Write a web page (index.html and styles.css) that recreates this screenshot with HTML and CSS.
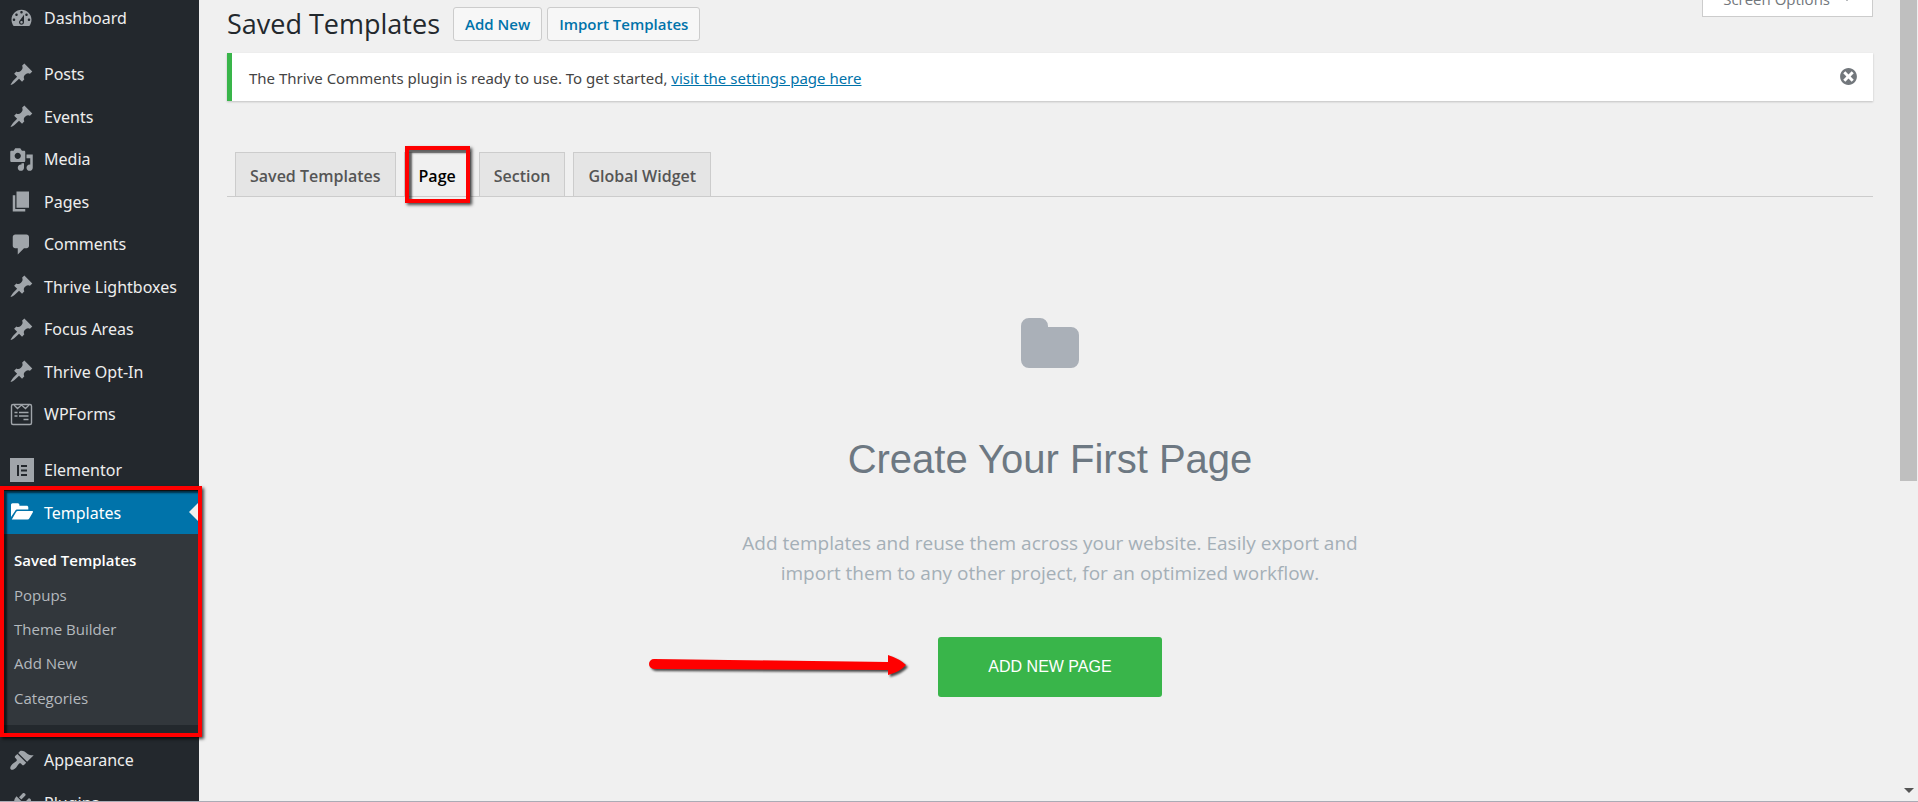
FILE: index.html
```html
<!DOCTYPE html>
<html lang="en">
<head>
<meta charset="utf-8">
<title>Saved Templates</title>
<link rel="stylesheet" href="styles.css">
</head>
<body>
<svg class="defs" aria-hidden="true">
  <symbol id="pin" viewBox="0 0 20 20"><path d="M10.44 3.02l1.82-1.82 6.36 6.35-1.83 1.82c-1.05-.68-2.48-.57-3.41.36l-.75.75c-.92.93-1.04 2.35-.35 3.41l-1.83 1.82-2.41-2.41-2.8 2.79c-.42.42-3.38 2.71-3.8 2.29s1.86-3.39 2.28-3.81l2.79-2.79L4.1 9.36l1.83-1.82c1.05.69 2.48.57 3.4-.36l.75-.75c.93-.92 1.05-2.35.36-3.41z"/></symbol>
</svg>
<div class="app">
  <nav class="sidebar" aria-label="Admin menu">
    <ul class="menu">
      <li class="menu-item"><a href="#"><svg class="icon" viewBox="0 0 20 20"><path d="M3.76 16h12.48c1.1-1.37 1.76-3.11 1.76-5 0-4.42-3.58-8-8-8s-8 3.58-8 8c0 1.89.66 3.63 1.76 5zM10 4c.55 0 1 .45 1 1s-.45 1-1 1-1-.45-1-1 .45-1 1-1zM6 6c.55 0 1 .45 1 1s-.45 1-1 1-1-.45-1-1 .45-1 1-1zm8 0c.55 0 1 .45 1 1s-.45 1-1 1-1-.45-1-1 .45-1 1-1zm-5.37 5.55L12 7v6c0 1.1-.9 2-2 2s-2-.9-2-2c0-.57.24-1.08.63-1.45zM4 10c.55 0 1 .45 1 1s-.45 1-1 1-1-.45-1-1 .45-1 1-1zm12 0c.55 0 1 .45 1 1s-.45 1-1 1-1-.45-1-1 .45-1 1-1zm-5 3c0-.55-.45-1-1-1s-1 .45-1 1 .45 1 1 1 1-.45 1-1z"/></svg>Dashboard</a></li>
    </ul>
    <ul class="menu">
      <li class="menu-item"><a href="#"><svg class="icon"><use href="#pin"/></svg>Posts</a></li>
      <li class="menu-item"><a href="#"><svg class="icon"><use href="#pin"/></svg>Events</a></li>
      <li class="menu-item"><a href="#"><svg class="icon" viewBox="0 0 20 20"><path d="M13 11V4c0-.55-.45-1-1-1h-1.67L9 1H5L3.67 3H2c-.55 0-1 .45-1 1v7c0 .55.45 1 1 1h10c.55 0 1-.45 1-1zM7 4.5c1.38 0 2.5 1.12 2.5 2.5S8.38 9.5 7 9.5 4.5 8.38 4.5 7 5.62 4.5 7 4.5zM14 6h5v10.5c0 1.38-1.12 2.5-2.5 2.5S14 17.88 14 16.5s1.12-2.5 2.5-2.5c.17 0 .34.02.5.05V9h-3V6zm-4 8.05V13h2v3.5c0 1.38-1.12 2.5-2.5 2.5S7 17.88 7 16.5 8.12 14 9.5 14c.17 0 .34.02.5.05z"/></svg>Media</a></li>
      <li class="menu-item"><a href="#"><svg class="icon" viewBox="0 0 20 20"><path d="M6 15V2h10v13H6zm-1 1h8v2H3V5h2v11z"/></svg>Pages</a></li>
      <li class="menu-item"><a href="#"><svg class="icon" viewBox="0 0 20 20"><path d="M5 2h9c1.1 0 2 .9 2 2v7c0 1.1-.9 2-2 2h-2l-5 5v-5H5c-1.1 0-2-.9-2-2V4c0-1.1.9-2 2-2z"/></svg>Comments</a></li>
      <li class="menu-item"><a href="#"><svg class="icon"><use href="#pin"/></svg>Thrive Lightboxes</a></li>
      <li class="menu-item"><a href="#"><svg class="icon"><use href="#pin"/></svg>Focus Areas</a></li>
      <li class="menu-item"><a href="#"><svg class="icon"><use href="#pin"/></svg>Thrive Opt-In</a></li>
      <li class="menu-item"><a href="#"><svg class="icon" viewBox="0 0 25 25"><g fill="none" stroke="currentColor"><rect x="2.5" y="2.5" width="20" height="20" rx="1.5" stroke-width="1.4"/><path d="M5 3l3.5 3.5L12.5 3l4 3.500L20 3" stroke-width="1.3"/><path d="M5.500 10.500h3M10 10.500h9.500M5.500 14h3M10 14h9.500M14.500 17.500h5" stroke-width="1.500"/></g></svg>WPForms</a></li>
    </ul>
    <ul class="menu">
      <li class="menu-item"><a href="#"><svg class="icon" viewBox="0 0 25 25"><path fill-rule="evenodd" d="M1 0h24v24H1zM8 7v11h2V7zM12 7v2h6V7zM12 11.500v2h6v-2zM12 16v2h6v-2z"/></svg>Elementor</a></li>
      <li class="menu-item current">
        <a href="#"><svg class="icon" viewBox="0 0 25 25"><path d="M2 17V5c0-1 .6-1.700 1.600-1.700h5.200c1 0 1.600.7 1.600 1.700v.7h7.200c1 0 1.700.7 1.700 1.700v2.200H8.500c-1 0-1.900.5-2.400 1.400z"/><path d="M2.800 19.500l4.200-7.300c.4-.7 1-1.100 1.800-1.100h14.400c.7 0 1 .6.700 1.200l-3.500 6c-.4.800-1 1.200-1.900 1.200z"/></svg>Templates</a>
        <ul class="submenu">
          <li><a class="selected" href="#">Saved Templates</a></li>
          <li><a href="#">Popups</a></li>
          <li><a href="#">Theme Builder</a></li>
          <li><a href="#">Add New</a></li>
          <li><a href="#">Categories</a></li>
        </ul>
        <span class="highlight highlight-menu"></span>
      </li>
    </ul>
    <ul class="menu">
      <li class="menu-item"><a href="#"><svg class="icon" viewBox="0 0 20 20"><path d="M14.48 11.06L7.41 3.99l1.5-1.5c.5-.56 2.3-.47 3.51.32 1.21.8 1.43 1.28 2.91 2.1 1.18.64 2.45 1.26 4.45.85zm-.71.71L6.7 4.7 4.93 6.47c-.39.39-.39 1.02 0 1.41l1.06 1.06c.39.39.39 1.03 0 1.42-.6.6-1.43 1.11-2.21 1.69-.35.26-.7.53-1.01.84C1.43 14.23.4 16.08 1.4 17.07c.99 1 2.84-.03 4.18-1.36.31-.31.58-.66.85-1.02.57-.78 1.08-1.61 1.69-2.21.39-.39 1.02-.39 1.41 0l1.06 1.06c.39.39 1.02.39 1.41 0z"/></svg>Appearance</a></li>
      <li class="menu-item"><a href="#"><svg class="icon" viewBox="0 0 20 20"><path d="M13.11 4.36L9.87 7.6 8 5.73l3.24-3.24c.35-.34 1.05-.2 1.56.32.52.51.66 1.21.31 1.55zm-8 1.77l.91-1.12 9.01 9.01-1.19.84c-.71.71-2.63 1.16-3.82 1.16H6.14L4.9 17.26c-.59.59-1.54.59-2.12 0-.59-.58-.59-1.53 0-2.12l1.24-1.24v-3.88c0-1.13.4-3.19 1.09-3.89zm7.26 3.97l3.24-3.24c.34-.35 1.04-.21 1.55.31.52.51.66 1.21.31 1.55l-3.24 3.25z"/></svg>Plugins</a></li>
    </ul>
  </nav>

  <main class="content">
    <header class="page-head">
      <h1>Saved Templates</h1>
      <a class="action" href="#">Add New</a>
      <a class="action" href="#">Import Templates</a>
      <button class="screen-options" type="button">Screen Options<span class="caret"></span></button>
    </header>

    <div class="notice">
      <p>The Thrive Comments plugin is ready to use. To get started, <a href="#">visit the settings page here</a></p>
      <button class="dismiss" type="button" aria-label="Dismiss this notice"><svg viewBox="0 0 20 20"><path d="M10 2c4.420 0 8 3.580 8 8s-3.580 8-8 8-8-3.580-8-8 3.580-8 8-8zm5 11l-3-3 3-3-2-2-3 3-3-3-2 2 3 3-3 3 2 2 3-3 3 3z"/></svg></button>
    </div>

    <nav class="tabs" aria-label="Template types">
      <a class="tab" href="#">Saved Templates</a>
      <a class="tab active" href="#">Page<span class="highlight highlight-tab"></span></a>
      <a class="tab" href="#">Section</a>
      <a class="tab" href="#">Global Widget</a>
    </nav>

    <section class="blank">
      <svg class="folder" viewBox="0 0 58 50"><path d="M8 0h11a8 8 0 0 1 8 8v1h23a8 8 0 0 1 8 8v25a8 8 0 0 1-8 8H8a8 8 0 0 1-8-8V8a8 8 0 0 1 8-8z"/></svg>
      <h2>Create Your First Page</h2>
      <p>Add templates and reuse them across your website. Easily export and import them to any other project, for an optimized workflow.</p>
      <a class="create" href="#">ADD NEW PAGE
        <svg class="pointer" viewBox="0 0 264 28"><path d="M6 6L240 9V2q12 4 18 10q-6 7-18 10V17L6 16a5 5 0 0 1 0-10z"/></svg>
      </a>
    </section>
  </main>

  <div class="scrollbar"><span class="thumb"></span><span class="down"></span></div>
</div>
</body>
</html>
```

FILE: styles.css
```css
* { box-sizing: border-box; }

body {
  margin: 0;
  background: #f0f0f0;
  color: #444;
  font-family: "Open Sans", "Noto Sans", sans-serif;
  font-size: 15px;
}

ul { list-style: none; margin: 0; padding: 0; }
a { color: #0073aa; }
.defs { display: none; }

.app {
  display: flex;
  height: 100vh;
  overflow: hidden;
  border-bottom: 1px solid #aaabb5;
}

/* Sidebar */
.sidebar {
  position: relative;
  z-index: 1;
  flex: 0 0 199px;
  display: flex;
  flex-direction: column;
  gap: 14px;
  margin-top: -3px;
  background: #23282d;
}

.menu-item > a {
  display: flex;
  align-items: center;
  gap: 10px;
  height: 42px;
  padding-left: 9px;
  color: #eee;
  font-family: "Noto Sans", "Open Sans", sans-serif;
  font-size: 16px;
  white-space: nowrap;
  text-decoration: none;
}

.menu-item:nth-child(even) > a { height: 43px; }

.icon {
  flex: none;
  width: 25px;
  height: 25px;
  color: #a0a5aa;
  fill: currentColor;
}

.current { position: relative; }
.menu-item.current > a {
  position: relative;
  background: #0073aa;
  color: #fff;
}
.current .icon { color: #fff; }
.current > a::after {
  content: "";
  position: absolute;
  right: 0;
  top: 11px;
  border: 10px solid transparent;
  border-left-width: 0;
  border-right-color: #f0f0f0;
}

.submenu {
  padding: 8px 0 9px;
  background: #32373c;
}
.submenu a {
  display: block;
  padding-left: 14px;
  line-height: 34px;
  color: #b4b9be;
  text-decoration: none;
}
.submenu a.selected { color: #fff; font-weight: 600; line-height: 36px; }
.submenu li:nth-child(n+4) a { line-height: 35px; }

.highlight {
  position: absolute;
  border: 4px solid #f00;
  box-shadow: 2px 2px 3px rgba(0, 0, 0, .7), inset 3px 3px 2px rgba(0, 0, 0, .6);
  pointer-events: none;
}
.highlight-menu { inset: -5px -3px -12px 0; }
.highlight-tab { inset: -7px 0 -7px 0; }

/* Content */
.content {
  flex: 1;
  min-width: 0;
  padding: 0 27px 0 28px;
}

.page-head {
  display: flex;
  align-items: flex-start;
  height: 53px;
  padding-top: 7px;
}
.page-head h1 {
  margin: 0 13px 0 0;
  color: #23282d;
  font-size: 27px;
  font-weight: 400;
  line-height: 34px;
}
.action {
  margin-right: 5px;
  padding: 0 11px;
  border: 1px solid #ccc;
  border-radius: 3px;
  background: #f7f7f7;
  font-weight: 600;
  line-height: 32px;
  text-decoration: none;
}
.screen-options {
  display: flex;
  align-items: center;
  gap: 12px;
  height: 34px;
  margin: -24px 0 0 auto;
  padding: 0 20px 2px;
  border: 1px solid #ccc;
  border-top: 0;
  background: #fff;
  color: #72777c;
  font: inherit;
}
.caret {
  border: 5px solid transparent;
  border-top-color: #72777c;
  border-bottom: 0;
}

.notice {
  display: flex;
  align-items: center;
  justify-content: space-between;
  height: 48px;
  padding: 0 14px 0 17px;
  border-left: 5px solid #39b54a;
  background: #fff;
  box-shadow: 0 1px 2px rgba(0, 0, 0, .2);
}
.notice p {
  margin: 0;
  padding-top: 2px;
  font-family: "Noto Sans", "Open Sans", sans-serif;
  line-height: 24px;
}
.dismiss {
  width: 21px;
  height: 23px;
  padding: 0 0 2px;
  border: 0;
  background: none;
  fill: #72777c;
}
.dismiss svg { display: block; }

.tabs {
  display: flex;
  gap: 8px;
  margin-top: 51px;
  padding-left: 8px;
  border-bottom: 1px solid #ccc;
}
.tab {
  position: relative;
  height: 44px;
  padding: 0 14px;
  border: 1px solid #ccc;
  border-bottom: 0;
  background: #e5e5e5;
  color: #555;
  font-size: 16px;
  font-weight: 600;
  line-height: 46px;
  text-decoration: none;
}
.tab.active { background: #f0f0f0; color: #000; }

.blank {
  display: flex;
  flex-direction: column;
  align-items: center;
  padding-top: 121px;
  text-align: center;
}
.folder { width: 58px; height: 50px; fill: #aab0b8; }
.blank h2 {
  margin: 67px 0 0;
  color: #6d7882;
  font: 400 40px/48px "Liberation Sans", Arial, sans-serif;
}
.blank p {
  max-width: 640px;
  margin: 45px 0 0;
  color: #a4afb7;
  font-size: 19px;
  line-height: 30px;
}
.create {
  position: relative;
  margin-top: 49px;
  padding: 0 50px;
  border-radius: 3px;
  background: #39b54a;
  color: #fff;
  font: 16px/60px "Liberation Sans", Arial, sans-serif;
  text-decoration: none;
}
.pointer {
  position: absolute;
  right: 100%;
  top: 16px;
  width: 264px;
  height: 28px;
  margin-right: 26px;
  overflow: visible;
  fill: #f00;
  filter: drop-shadow(2px 2px 1px rgba(0, 0, 0, .7));
}

.scrollbar {
  flex: 0 0 18px;
  display: flex;
  flex-direction: column;
  align-items: center;
  justify-content: space-between;
  padding-right: 1px;
}
.thumb { width: 17px; height: 60%; background: #bfbfbf; }
.down {
  margin-bottom: 8px;
  border: 5px solid transparent;
  border-top-color: #555;
  border-bottom: 0;
}
```
